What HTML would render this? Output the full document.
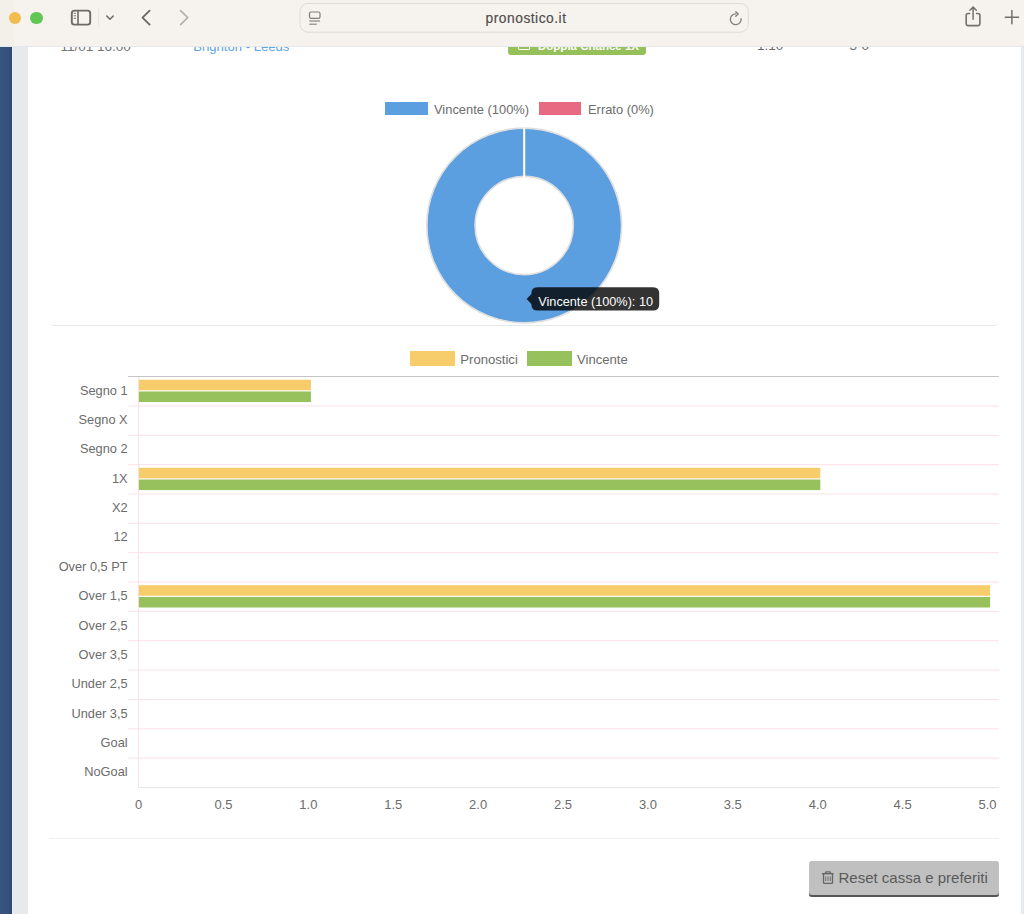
<!DOCTYPE html>
<html><head><meta charset="utf-8">
<style>
*{margin:0;padding:0;box-sizing:border-box}
html,body{width:1024px;height:914px;overflow:hidden;background:#fff;font-family:"Liberation Sans",sans-serif;position:relative}
.abs{position:absolute}
.t{position:absolute;white-space:nowrap}
</style></head><body>
<div class="abs" style="left:0;top:0;width:12px;height:914px;background:linear-gradient(to right,#39557f 0%,#36527c 70%,#2c4670 100%)"></div>
<div class="abs" style="left:12px;top:0;width:1px;height:914px;background:#eef1f3"></div>
<div class="abs" style="left:13px;top:0;width:15px;height:914px;background:#e6eaed"></div>
<div class="abs" style="left:1021px;top:0;width:3px;height:914px;background:#e6eaed"></div>
<div class="t" style="left:60.50px;top:36.52px;font-size:13.5px;line-height:20px;color:#747474;font-weight:normal;">11/01 16.00</div>
<div class="t" style="left:193.30px;top:36.66px;font-size:13.1px;line-height:20px;color:#5aa5e5;font-weight:normal;">Brighton - Leeds</div>
<div class="abs" style="left:508px;top:30px;width:138px;height:25px;background:#96c05a;border-radius:3px"></div>
<div class="abs" style="left:518px;top:40px;width:12px;height:10px;border:1.6px solid #fff;border-top:none;border-radius:0 0 2px 2px"></div>
<div class="t" style="left:538.00px;top:36.22px;font-size:11.5px;line-height:20px;color:#fff;font-weight:bold;">Doppia Chance 1X</div>
<div class="t" style="left:757.00px;top:35.92px;font-size:13.5px;line-height:20px;color:#6a6a6a;font-weight:normal;">1.10</div>
<div class="t" style="left:849.50px;top:35.92px;font-size:13.5px;line-height:20px;color:#6a6a6a;font-weight:normal;">3-0</div>
<div class="abs" style="left:0;top:0;width:1024px;height:46px;background:#f6f3ef;z-index:10">
  <div class="abs" style="left:0;top:0;width:14px;height:46px;background:#f3f0ea"></div>
  <div class="abs" style="left:0;top:46px;width:1024px;height:1px;background:#e5e8ea"></div>
  <div class="abs" style="left:8.5px;top:11.8px;width:12.6px;height:12.6px;border-radius:50%;background:#f2bd4f"></div>
  <div class="abs" style="left:30px;top:11.8px;width:12.6px;height:12.6px;border-radius:50%;background:#62c655"></div>
  <svg class="abs" style="left:0;top:0" width="1024" height="46" viewBox="0 0 1024 46">
    <rect x="71.8" y="10.6" width="18.4" height="14" rx="2.6" fill="none" stroke="#6e6a66" stroke-width="1.9"/>
    <line x1="78" y1="10.6" x2="78" y2="24.6" stroke="#6e6a66" stroke-width="1.6"/>
    <line x1="73.6" y1="13.3" x2="76" y2="13.3" stroke="#6e6a66" stroke-width="0.9"/>
    <line x1="73.6" y1="15.8" x2="76" y2="15.8" stroke="#6e6a66" stroke-width="0.9"/>
    <line x1="73.6" y1="18.3" x2="76" y2="18.3" stroke="#6e6a66" stroke-width="0.9"/>
    <line x1="98.6" y1="9" x2="98.6" y2="27" stroke="#e8e5e1" stroke-width="1"/>
    <polyline points="106.8,16 110,19.2 113.2,16" fill="none" stroke="#6e6a66" stroke-width="1.6" stroke-linecap="round" stroke-linejoin="round"/>
    <polyline points="149.6,10.6 142.5,17.6 149.6,24.6" fill="none" stroke="#6a6663" stroke-width="1.8" stroke-linecap="round" stroke-linejoin="round"/>
    <polyline points="180.6,10.6 187.7,17.6 180.6,24.6" fill="none" stroke="#b6b3af" stroke-width="1.8" stroke-linecap="round" stroke-linejoin="round"/>
    <rect x="300" y="3.4" width="448.3" height="28.8" rx="8" fill="#f6f3ef" stroke="#dedbd6" stroke-width="1"/>
    <rect x="309.5" y="12" width="10.5" height="6.4" rx="1.6" fill="none" stroke="#807c78" stroke-width="1.2"/>
    <line x1="309.3" y1="21" x2="320" y2="21" stroke="#807c78" stroke-width="1.1"/>
    <line x1="309.3" y1="24.2" x2="316.7" y2="24.2" stroke="#807c78" stroke-width="1.1"/>
    <path d="M741.1,18.6 A5.4,5.4 0 1 1 735.9,13.9" fill="none" stroke="#827e7a" stroke-width="1.3" stroke-linecap="round"/>
    <polyline points="735.8,11.7 738.2,14.0 735.8,16.3" fill="none" stroke="#827e7a" stroke-width="1.4" stroke-linecap="round" stroke-linejoin="round"/>
    <path d="M969.6,13.5 H968.2 Q966.2,13.5 966.2,15.5 V23.6 Q966.2,25.6 968.2,25.6 H977.9 Q979.9,25.6 979.9,23.6 V15.5 Q979.9,13.5 977.9,13.5 H976.6" fill="none" stroke="#74706c" stroke-width="1.6" stroke-linecap="round" stroke-linejoin="round"/>
    <line x1="973.1" y1="7.6" x2="973.1" y2="19.2" stroke="#74706c" stroke-width="1.5" stroke-linecap="round"/>
    <polyline points="969.9,10.2 973.1,7.1 976.3,10.2" fill="none" stroke="#74706c" stroke-width="1.5" stroke-linecap="round" stroke-linejoin="round"/>
    <line x1="1011.9" y1="10.6" x2="1011.9" y2="23.8" stroke="#74706c" stroke-width="1.5" stroke-linecap="round"/>
    <line x1="1005.3" y1="17.3" x2="1018.6" y2="17.3" stroke="#74706c" stroke-width="1.5" stroke-linecap="round"/>
  </svg>

<div class="t" style="left:485.60px;top:8.92px;font-size:13.8px;line-height:20px;color:#4f4b48;font-weight:normal;letter-spacing:0.5px;-webkit-text-stroke:0.15px #4f4b48">pronostico.it</div>
</div>
<div class="abs" style="left:385px;top:102.4px;width:43px;height:12.7px;background:#5c9fe0"></div>
<div class="t" style="left:434.00px;top:100.13px;font-size:12.9px;line-height:20px;color:#6c6c6c;font-weight:normal;">Vincente (100%)</div>
<div class="abs" style="left:538.9px;top:102.4px;width:42.5px;height:12.7px;background:#e86a82"></div>
<div class="t" style="left:588.00px;top:100.13px;font-size:12.9px;line-height:20px;color:#6c6c6c;font-weight:normal;">Errato (0%)</div>
<svg class="abs" style="left:0;top:0" width="1024" height="340" viewBox="0 0 1024 340">
  <circle cx="524.2" cy="225.5" r="73.2" fill="none" stroke="#5c9fe0" stroke-width="47.6"/>
  <circle cx="524.2" cy="225.5" r="97.4" fill="none" stroke="#dedede" stroke-width="1.6"/>
  <circle cx="524.2" cy="225.5" r="49.1" fill="none" stroke="#dedede" stroke-width="1.6"/>
  <line x1="524.2" y1="127.5" x2="524.2" y2="177" stroke="#fff" stroke-width="2.1"/>
  <path d="M537.4,287.2 H653.2 Q659.2,287.2 659.2,293.2 V304.5 Q659.2,310.5 653.2,310.5 H537.4 Q531.4,310.5 531.4,304.5 V304 L526.6,299 L531.4,294 V293.2 Q531.4,287.2 537.4,287.2 Z" fill="rgba(0,0,0,0.8)"/>
</svg>
<div class="t" style="left:538.30px;top:291.60px;font-size:12.7px;line-height:20px;color:#fff;font-weight:normal;">Vincente (100%): 10</div>
<div class="abs" style="left:49px;top:319px;width:950px;height:7px;border-bottom:1px solid #e6e9ec;border-radius:0 0 5px 5px"></div>
<div class="abs" style="left:409.8px;top:351.2px;width:45px;height:14.8px;background:#f6cd6a"></div>
<div class="t" style="left:460.30px;top:350.16px;font-size:13.1px;line-height:20px;color:#6c6c6c;font-weight:normal;">Pronostici</div>
<div class="abs" style="left:527px;top:351.2px;width:45px;height:14.8px;background:#97c15c"></div>
<div class="t" style="left:577.00px;top:350.16px;font-size:13.1px;line-height:20px;color:#6c6c6c;font-weight:normal;">Vincente</div>
<svg class="abs" style="left:0;top:0" width="1024" height="914" viewBox="0 0 1024 914"><rect x="128" y="405.45" width="871" height="1" fill="#fbe1e6"/><rect x="128" y="434.80" width="871" height="1" fill="#fbe1e6"/><rect x="128" y="464.15" width="871" height="1" fill="#fbe1e6"/><rect x="128" y="493.50" width="871" height="1" fill="#fbe1e6"/><rect x="128" y="522.85" width="871" height="1" fill="#fbe1e6"/><rect x="128" y="552.20" width="871" height="1" fill="#fbe1e6"/><rect x="128" y="581.55" width="871" height="1" fill="#fbe1e6"/><rect x="128" y="610.90" width="871" height="1" fill="#fbe1e6"/><rect x="128" y="640.25" width="871" height="1" fill="#fbe1e6"/><rect x="128" y="669.60" width="871" height="1" fill="#fbe1e6"/><rect x="128" y="698.95" width="871" height="1" fill="#fbe1e6"/><rect x="128" y="728.30" width="871" height="1" fill="#fbe1e6"/><rect x="128" y="757.65" width="871" height="1" fill="#fbe1e6"/><rect x="128" y="376" width="871" height="1" fill="#c4c4c4"/><rect x="138" y="377" width="1" height="410" fill="#fbe1e6"/><rect x="138" y="787" width="861" height="1" fill="#e2e6ea"/><rect x="138.9" y="379.72" width="172.00" height="10.57" fill="#f6cd6a"/><rect x="138.9" y="391.46" width="172.00" height="10.57" fill="#97c15c"/><rect x="138.9" y="467.77" width="681.40" height="10.57" fill="#f6cd6a"/><rect x="138.9" y="479.51" width="681.40" height="10.57" fill="#97c15c"/><rect x="138.9" y="585.17" width="851.20" height="10.57" fill="#f6cd6a"/><rect x="138.9" y="596.91" width="851.20" height="10.57" fill="#97c15c"/></svg>
<div class="t" style="right:896.40px;top:380.74px;font-size:12.8px;line-height:20px;color:#6c6c6c;font-weight:normal;">Segno 1</div>
<div class="t" style="right:896.40px;top:410.09px;font-size:12.8px;line-height:20px;color:#6c6c6c;font-weight:normal;">Segno X</div>
<div class="t" style="right:896.40px;top:439.44px;font-size:12.8px;line-height:20px;color:#6c6c6c;font-weight:normal;">Segno 2</div>
<div class="t" style="right:896.40px;top:468.79px;font-size:12.8px;line-height:20px;color:#6c6c6c;font-weight:normal;">1X</div>
<div class="t" style="right:896.40px;top:498.14px;font-size:12.8px;line-height:20px;color:#6c6c6c;font-weight:normal;">X2</div>
<div class="t" style="right:896.40px;top:527.49px;font-size:12.8px;line-height:20px;color:#6c6c6c;font-weight:normal;">12</div>
<div class="t" style="right:896.40px;top:556.84px;font-size:12.8px;line-height:20px;color:#6c6c6c;font-weight:normal;">Over 0,5 PT</div>
<div class="t" style="right:896.40px;top:586.19px;font-size:12.8px;line-height:20px;color:#6c6c6c;font-weight:normal;">Over 1,5</div>
<div class="t" style="right:896.40px;top:615.54px;font-size:12.8px;line-height:20px;color:#6c6c6c;font-weight:normal;">Over 2,5</div>
<div class="t" style="right:896.40px;top:644.89px;font-size:12.8px;line-height:20px;color:#6c6c6c;font-weight:normal;">Over 3,5</div>
<div class="t" style="right:896.40px;top:674.24px;font-size:12.8px;line-height:20px;color:#6c6c6c;font-weight:normal;">Under 2,5</div>
<div class="t" style="right:896.40px;top:703.59px;font-size:12.8px;line-height:20px;color:#6c6c6c;font-weight:normal;">Under 3,5</div>
<div class="t" style="right:896.40px;top:732.94px;font-size:12.8px;line-height:20px;color:#6c6c6c;font-weight:normal;">Goal</div>
<div class="t" style="right:896.40px;top:762.29px;font-size:12.8px;line-height:20px;color:#6c6c6c;font-weight:normal;">NoGoal</div>
<div class="t" style="left:-61.40px;width:400px;text-align:center;top:795.40px;font-size:13px;line-height:20px;color:#6c6c6c;font-weight:normal;">0</div>
<div class="t" style="left:23.49px;width:400px;text-align:center;top:795.40px;font-size:13px;line-height:20px;color:#6c6c6c;font-weight:normal;">0.5</div>
<div class="t" style="left:108.38px;width:400px;text-align:center;top:795.40px;font-size:13px;line-height:20px;color:#6c6c6c;font-weight:normal;">1.0</div>
<div class="t" style="left:193.27px;width:400px;text-align:center;top:795.40px;font-size:13px;line-height:20px;color:#6c6c6c;font-weight:normal;">1.5</div>
<div class="t" style="left:278.16px;width:400px;text-align:center;top:795.40px;font-size:13px;line-height:20px;color:#6c6c6c;font-weight:normal;">2.0</div>
<div class="t" style="left:363.05px;width:400px;text-align:center;top:795.40px;font-size:13px;line-height:20px;color:#6c6c6c;font-weight:normal;">2.5</div>
<div class="t" style="left:447.94px;width:400px;text-align:center;top:795.40px;font-size:13px;line-height:20px;color:#6c6c6c;font-weight:normal;">3.0</div>
<div class="t" style="left:532.83px;width:400px;text-align:center;top:795.40px;font-size:13px;line-height:20px;color:#6c6c6c;font-weight:normal;">3.5</div>
<div class="t" style="left:617.72px;width:400px;text-align:center;top:795.40px;font-size:13px;line-height:20px;color:#6c6c6c;font-weight:normal;">4.0</div>
<div class="t" style="left:702.61px;width:400px;text-align:center;top:795.40px;font-size:13px;line-height:20px;color:#6c6c6c;font-weight:normal;">4.5</div>
<div class="t" style="left:787.50px;width:400px;text-align:center;top:795.40px;font-size:13px;line-height:20px;color:#6c6c6c;font-weight:normal;">5.0</div>
<div class="abs" style="left:49px;top:838.3px;width:950px;height:1px;background:#f0f0f0"></div>
<div class="abs" style="left:809px;top:861px;width:190px;height:35.5px;background:#c0c0c0;border-radius:3px;box-shadow:inset 0 -2px 0 #555"></div>
<svg class="abs" style="left:0;top:0" width="1024" height="914" viewBox="0 0 1024 914">
 <path d="M825.2,873.4 L825.9,871.8 H830 L830.7,873.4" fill="none" stroke="#666" stroke-width="1.3" stroke-linejoin="round"/>
 <line x1="821.9" y1="873.7" x2="833.6" y2="873.7" stroke="#666" stroke-width="1.4"/>
 <path d="M823.5,874 V882.5 Q823.5,883.4 824.4,883.4 H831.6 Q832.5,883.4 832.5,882.5 V874" fill="none" stroke="#666" stroke-width="1.3"/>
 <line x1="825.7" y1="876.4" x2="825.7" y2="881" stroke="#666" stroke-width="0.9"/>
 <line x1="828" y1="876.4" x2="828" y2="881" stroke="#666" stroke-width="0.9"/>
 <line x1="830.3" y1="876.4" x2="830.3" y2="881" stroke="#666" stroke-width="0.9"/>
</svg>
<div class="t" style="left:838.50px;top:868.00px;font-size:15px;line-height:20px;color:#5a5a5a;font-weight:normal;">Reset cassa e preferiti</div>
</body></html>
